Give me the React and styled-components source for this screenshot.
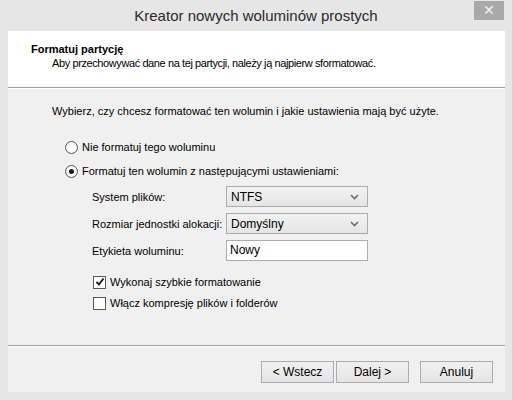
import React from "react";
import styled, { createGlobalStyle } from "styled-components";

const GlobalStyle = createGlobalStyle`
    body {
        margin: 0;
        font-family: "Liberation Sans", Arial, sans-serif;
        font-size: 11px;
        color: #000;
    }
`;

const Window = styled.div`
    width: 513px;
    height: 400px;
    box-sizing: border-box;
    background: #e6e6e6;
    display: flex;
    flex-direction: column;
    border-right: 1px solid #d2d2d2;
`;

const TitleBar = styled.div`
    height: 31px;
    flex-shrink: 0;
    display: grid;
    grid-template-columns: 38px 1fr 30px 8px;
    align-items: start;
`;

const Title = styled.div`
    grid-column: 2;
    text-align: center;
    line-height: 31px;
    font-size: 15px;
    color: #2b2b2b;
`;

const CloseButton = styled.div`
    grid-column: 3;
    height: 19px;
    margin-top: 1px;
    background: #a9a9a9;
    color: #f4f4f4;
    font-size: 14px;
    line-height: 19px;
    text-align: center;
`;

const Client = styled.div`
    flex: 1;
    margin: 0 7px 8px 8px;
    background: #f0f0f0;
    display: flex;
    flex-direction: column;
`;

const Header = styled.div`
    height: 57px;
    flex-shrink: 0;
    box-sizing: border-box;
    background: #fff;
    padding: 11px 0 0 23px;
    border-bottom: 1px solid #a0a0a0;
`;

const HeaderTitle = styled.div`
    font-weight: bold;
    line-height: 14px;
`;

const HeaderText = styled.div`
    line-height: 14px;
    padding-left: 21px;
    letter-spacing: -0.4px;
`;

const Body = styled.div`
    flex: 1;
    padding: 15px 0 0 44px;
    border-top: 1px solid #fff;
`;

const Intro = styled.div`
    line-height: 14px;
`;

const OptionList = styled.div`
    display: flex;
    flex-direction: column;
    gap: ${(p) => p.gap}px;
    margin: ${(p) => p.top}px 0 0 ${(p) => p.left}px;
`;

const Option = styled.div`
    display: flex;
    align-items: center;
    gap: 4px;
    line-height: 14px;
`;

const Radio = styled.span`
    width: 11px;
    height: 11px;
    border-radius: 50%;
    border: 1px solid #5a5a5a;
    background: radial-gradient(circle, #ffffff 40%, #e4e4e4 100%);
    display: flex;
    align-items: center;
    justify-content: center;
    &::after {
        content: "";
        width: 5px;
        height: 5px;
        border-radius: 50%;
        background: ${(p) => (p.checked ? "#1a1a1a" : "transparent")};
    }
`;

const Check = styled.span`
    width: 11px;
    height: 11px;
    border: 1px solid #5a5a5a;
    background: #fff;
    display: flex;
    align-items: center;
    justify-content: center;
`;

const Form = styled.div`
    display: grid;
    grid-template-columns: 134px 142px;
    grid-auto-rows: 21px;
    row-gap: 6px;
    align-items: center;
    margin: 8px 0 0 40px;
`;

const Label = styled.div`
    line-height: 14px;
`;

const Select = styled.div`
    height: 21px;
    box-sizing: border-box;
    border: 1px solid #acacac;
    background: linear-gradient(#f2f2f2, #e5e5e5);
    display: flex;
    align-items: center;
    justify-content: space-between;
    padding: 0 8px 0 4px;
    font-size: 12px;
`;

const Input = styled.div`
    height: 21px;
    box-sizing: border-box;
    border: 1px solid #abadb3;
    background: #fff;
    padding: 2px 0 0 3px;
    font-size: 12px;
`;

const Footer = styled.div`
    height: 47px;
    flex-shrink: 0;
    box-sizing: border-box;
    border-top: 1px solid #a0a0a0;
    box-shadow: inset 0 1px 0 #fff;
    display: flex;
    justify-content: flex-end;
    align-items: flex-start;
    padding: 15px 12px 0 0;
`;

const Button = styled.div`
    width: 73px;
    height: 22px;
    box-sizing: border-box;
    border: 1px solid #acacac;
    background: linear-gradient(#f0f0f0, #e5e5e5);
    display: flex;
    align-items: center;
    justify-content: center;
    font-size: 12px;
    margin-left: ${(p) => p.gap || 0}px;
`;

const Chevron = () => (
    <svg width="9" height="6" viewBox="0 0 9 6">
        <path d="M1 1 L4.5 4.5 L8 1" fill="none" stroke="#6d6d6d" strokeWidth="1.6" />
    </svg>
);

const Tick = () => (
    <svg width="10" height="10" viewBox="0 0 10 10">
        <path d="M1.5 5 L4 7.5 L8.5 1.5" fill="none" stroke="#111" strokeWidth="1.8" />
    </svg>
);

const App = () => (
    <Window>
        <GlobalStyle />
        <TitleBar>
            <Title>Kreator nowych woluminów prostych</Title>
            <CloseButton>✕</CloseButton>
        </TitleBar>
        <Client>
            <Header>
                <HeaderTitle>Formatuj partycję</HeaderTitle>
                <HeaderText>Aby przechowywać dane na tej partycji, należy ją najpierw sformatować.</HeaderText>
            </Header>
            <Body>
                <Intro>Wybierz, czy chcesz formatować ten wolumin i jakie ustawienia mają być użyte.</Intro>
                <OptionList top={22} left={13} gap={10}>
                    <Option><Radio />Nie formatuj tego woluminu</Option>
                    <Option><Radio checked />Formatuj ten wolumin z następującymi ustawieniami:</Option>
                </OptionList>
                <Form>
                    <Label>System plików:</Label>
                    <Select>NTFS<Chevron /></Select>
                    <Label>Rozmiar jednostki alokacji:</Label>
                    <Select>Domyślny<Chevron /></Select>
                    <Label>Etykieta woluminu:</Label>
                    <Input>Nowy</Input>
                </Form>
                <OptionList top={14} left={41} gap={7}>
                    <Option><Check><Tick /></Check>Wykonaj szybkie formatowanie</Option>
                    <Option><Check />Włącz kompresję plików i folderów</Option>
                </OptionList>
            </Body>
            <Footer>
                <Button>&lt; Wstecz</Button>
                <Button gap={2}>Dalej &gt;</Button>
                <Button gap={11}>Anuluj</Button>
            </Footer>
        </Client>
    </Window>
);

export default App;
